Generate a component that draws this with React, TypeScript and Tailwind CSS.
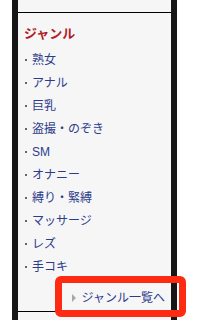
const GENRES = [
  "熟女",
  "アナル",
  "巨乳",
  "盗撮・のぞき",
  "SM",
  "オナニー",
  "縛り・緊縛",
  "マッサージ",
  "レズ",
  "手コキ",
];

export default function App() {
  return (
    <div
      className="relative h-[320px] w-[200px] overflow-hidden bg-white"
      style={{ fontFamily: '"Liberation Sans", "Noto Sans CJK JP", sans-serif' }}
    >
      <div className="ml-[12px] flex h-full w-[165px] flex-col border-x-[6px] border-[#161616] bg-[#f6f6f6]">
        <div className="h-[12px] shrink-0" />
        <div className="h-px shrink-0 bg-black" />

        <div className="flex flex-1 flex-col pt-[11px]">
          <h2 className="pl-[6px] text-[13px] font-bold leading-[20px] text-[#b01c28]">
            ジャンル
          </h2>

          <ul className="mt-[4px] flex flex-col">
            {GENRES.map((g) => (
              <li key={g} className="flex h-[23px] items-center">
                <span className="ml-[7px] h-[2px] w-[2px] bg-[#666]" />
                <span className="ml-[5px] text-[12px] leading-none text-[#2c3b8c]">
                  {g}
                </span>
              </li>
            ))}
          </ul>

          <div className="mt-[9px] flex h-[22px] items-center justify-end pr-[6px]">
            <span className="mr-[6px] h-0 w-0 border-y-[4px] border-l-[4px] border-y-transparent border-l-[#a8a8a8]" />
            <span className="text-[12px] leading-none text-[#2c3b8c]">
              ジャンル一覧へ
            </span>
          </div>
        </div>

        <div className="mb-[8px] h-px shrink-0 bg-black" />
      </div>

      {/* highlight box over the link */}
      <div className="absolute left-[55px] top-[276px] h-[41px] w-[131px] rounded-[6px] border-[7px] border-[#ff2a12]" />
    </div>
  );
}
